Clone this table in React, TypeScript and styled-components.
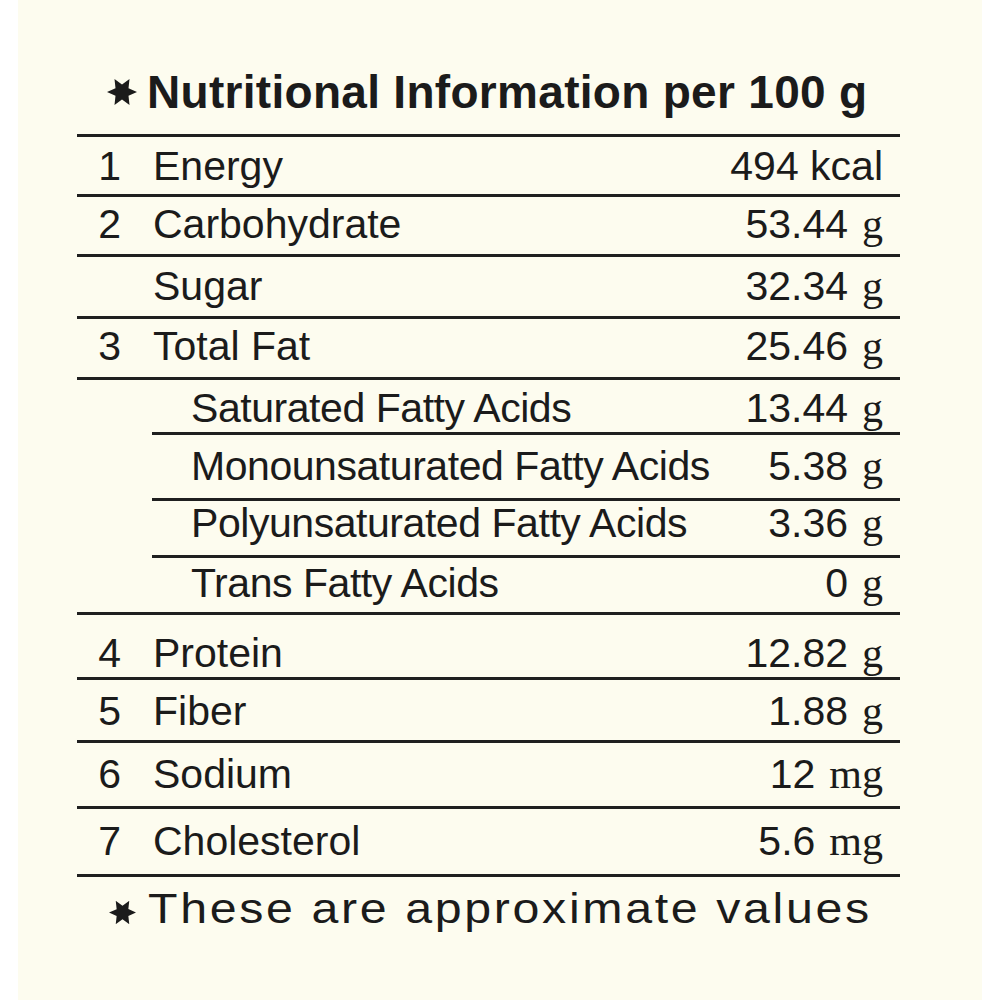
import React from "react";
import styled, { createGlobalStyle } from "styled-components";

const Global = createGlobalStyle`
  html, body { margin: 0; padding: 0; background: #ffffff; }
  #root { width: 1000px; }
`;

const Panel = styled.div`
  margin: 0 18px;
  height: 1000px;
  box-sizing: border-box;
  background: #fdfcef;
  padding: 69px 82px 0 59px;
  color: #1b1b1b;
  font-family: "Liberation Sans", Arial, sans-serif;
  overflow: hidden;
`;

const Title = styled.h1`
  display: flex;
  align-items: center;
  gap: 10px;
  margin: 0 0 19px;
  padding-left: 30px;
  font-size: 46px;
  line-height: 46px;
  font-weight: 700;
  letter-spacing: 0.3px;
`;

const Table = styled.div`
  border-top: 3px solid #1f1f1f;
`;

const Row = styled.div<{ $h: number; $pb: number }>`
  display: grid;
  grid-template-columns: 44px 1fr auto;
  align-items: end;
  box-sizing: border-box;
  height: ${(p) => p.$h}px;
  padding: 0 17px ${(p) => p.$pb}px 0;
  border-bottom: 3px solid #1f1f1f;
  font-size: 41px;
  line-height: 41px;
`;

const FatGroup = styled.div`
  border-bottom: 3px solid #1f1f1f;
`;

const SubList = styled.div`
  margin-left: 75px;
`;

const SubRow = styled.div<{ $h: number; $pb: number; $last?: boolean }>`
  display: grid;
  grid-template-columns: 1fr auto;
  align-items: end;
  box-sizing: border-box;
  height: ${(p) => p.$h}px;
  padding: 0 17px ${(p) => p.$pb}px 39px;
  border-bottom: ${(p) => (p.$last ? "none" : "3px solid #1f1f1f")};
  font-size: 41px;
  line-height: 41px;
`;

const Num = styled.span`
  text-align: right;
`;

const Label = styled.span`
  padding-left: 32px;
  white-space: nowrap;
`;

const SubLabel = styled.span`
  white-space: nowrap;
  letter-spacing: -0.45px;
`;

const Value = styled.span`
  white-space: nowrap;
  text-align: right;
`;

const Unit = styled.span`
  font-family: "Liberation Serif", "Times New Roman", serif;
  font-size: 42px;
  margin-left: 14px;
`;

const Footer = styled.p`
  display: flex;
  align-items: flex-start;
  gap: 12px;
  margin: 11px 0 0;
  padding-left: 32px;
  font-size: 42px;
  line-height: 42px;
  white-space: nowrap;
`;

const WideText = styled.span`
  display: inline-block;
  letter-spacing: 2.3px;
  transform: scaleX(1.15);
  transform-origin: left center;
`;

const StarBox = styled.span<{ $w: number; $h: number; $mt: number }>`
  display: inline-flex;
  flex: none;
  width: ${(p) => p.$w}px;
  height: ${(p) => p.$h}px;
  margin-top: ${(p) => p.$mt}px;
`;

function starPoints(R: number, r: number, cx: number, cy: number) {
  const pts: string[] = [];
  for (let i = 0; i < 12; i++) {
    const a = (Math.PI / 6) * i;
    const rad = i % 2 === 0 ? R : r;
    pts.push(`${(cx + rad * Math.cos(a)).toFixed(2)},${(cy + rad * Math.sin(a)).toFixed(2)}`);
  }
  return pts.join(" ");
}

const Star: React.FC<{ w: number; h: number; mt?: number }> = ({ w, h, mt = 0 }) => (
  <StarBox $w={w} $h={h} $mt={mt}>
    <svg width={w} height={h} viewBox={`0 0 ${w} ${h}`}>
      <polygon points={starPoints(w / 2, w * 0.25, w / 2, h / 2)} fill="#1b1b1b" />
    </svg>
  </StarBox>
);

type Item = {
  n: string;
  label: string;
  value: string;
  unit?: string;
  h: number;
  pb: number;
};

const top: Item[] = [
  { n: "1", label: "Energy", value: "494 kcal", h: 60, pb: 7 },
  { n: "2", label: "Carbohydrate", value: "53.44", unit: "g", h: 60, pb: 9 },
  { n: "", label: "Sugar", value: "32.34", unit: "g", h: 62, pb: 9 },
  { n: "3", label: "Total Fat", value: "25.46", unit: "g", h: 61, pb: 10 },
];

const fats: Item[] = [
  { n: "", label: "Saturated Fatty Acids", value: "13.44", unit: "g", h: 55, pb: 3 },
  { n: "", label: "Monounsaturated Fatty Acids", value: "5.38", unit: "g", h: 66, pb: 11 },
  { n: "", label: "Polyunsaturated Fatty Acids", value: "3.36", unit: "g", h: 57, pb: 11 },
  { n: "", label: "Trans Fatty Acids", value: "0", unit: "g", h: 54, pb: 8 },
];

const bottom: Item[] = [
  { n: "4", label: "Protein", value: "12.82", unit: "g", h: 65, pb: 3 },
  { n: "5", label: "Fiber", value: "1.88", unit: "g", h: 63, pb: 8 },
  { n: "6", label: "Sodium", value: "12", unit: "mg", h: 66, pb: 11 },
  { n: "7", label: "Cholesterol", value: "5.6", unit: "mg", h: 68, pb: 12 },
];

const ValueCell: React.FC<{ item: Item }> = ({ item }) => (
  <Value>
    {item.value}
    {item.unit && <Unit>{item.unit}</Unit>}
  </Value>
);

const MainRow: React.FC<{ item: Item }> = ({ item }) => (
  <Row $h={item.h} $pb={item.pb}>
    <Num>{item.n}</Num>
    <Label>{item.label}</Label>
    <ValueCell item={item} />
  </Row>
);

export default function App() {
  return (
    <>
      <Global />
      <Panel>
        <Title>
          <Star w={30} h={26} />
          <span>Nutritional Information per 100 g</span>
        </Title>
        <Table>
          {top.map((it) => (
            <MainRow key={it.label} item={it} />
          ))}
          <FatGroup>
            <SubList>
              {fats.map((it, i) => (
                <SubRow key={it.label} $h={it.h} $pb={it.pb} $last={i === fats.length - 1}>
                  <SubLabel>{it.label}</SubLabel>
                  <ValueCell item={it} />
                </SubRow>
              ))}
            </SubList>
          </FatGroup>
          {bottom.map((it) => (
            <MainRow key={it.label} item={it} />
          ))}
        </Table>
        <Footer>
          <Star w={27} h={23} mt={13} />
          <WideText>These are approximate values</WideText>
        </Footer>
      </Panel>
    </>
  );
}
